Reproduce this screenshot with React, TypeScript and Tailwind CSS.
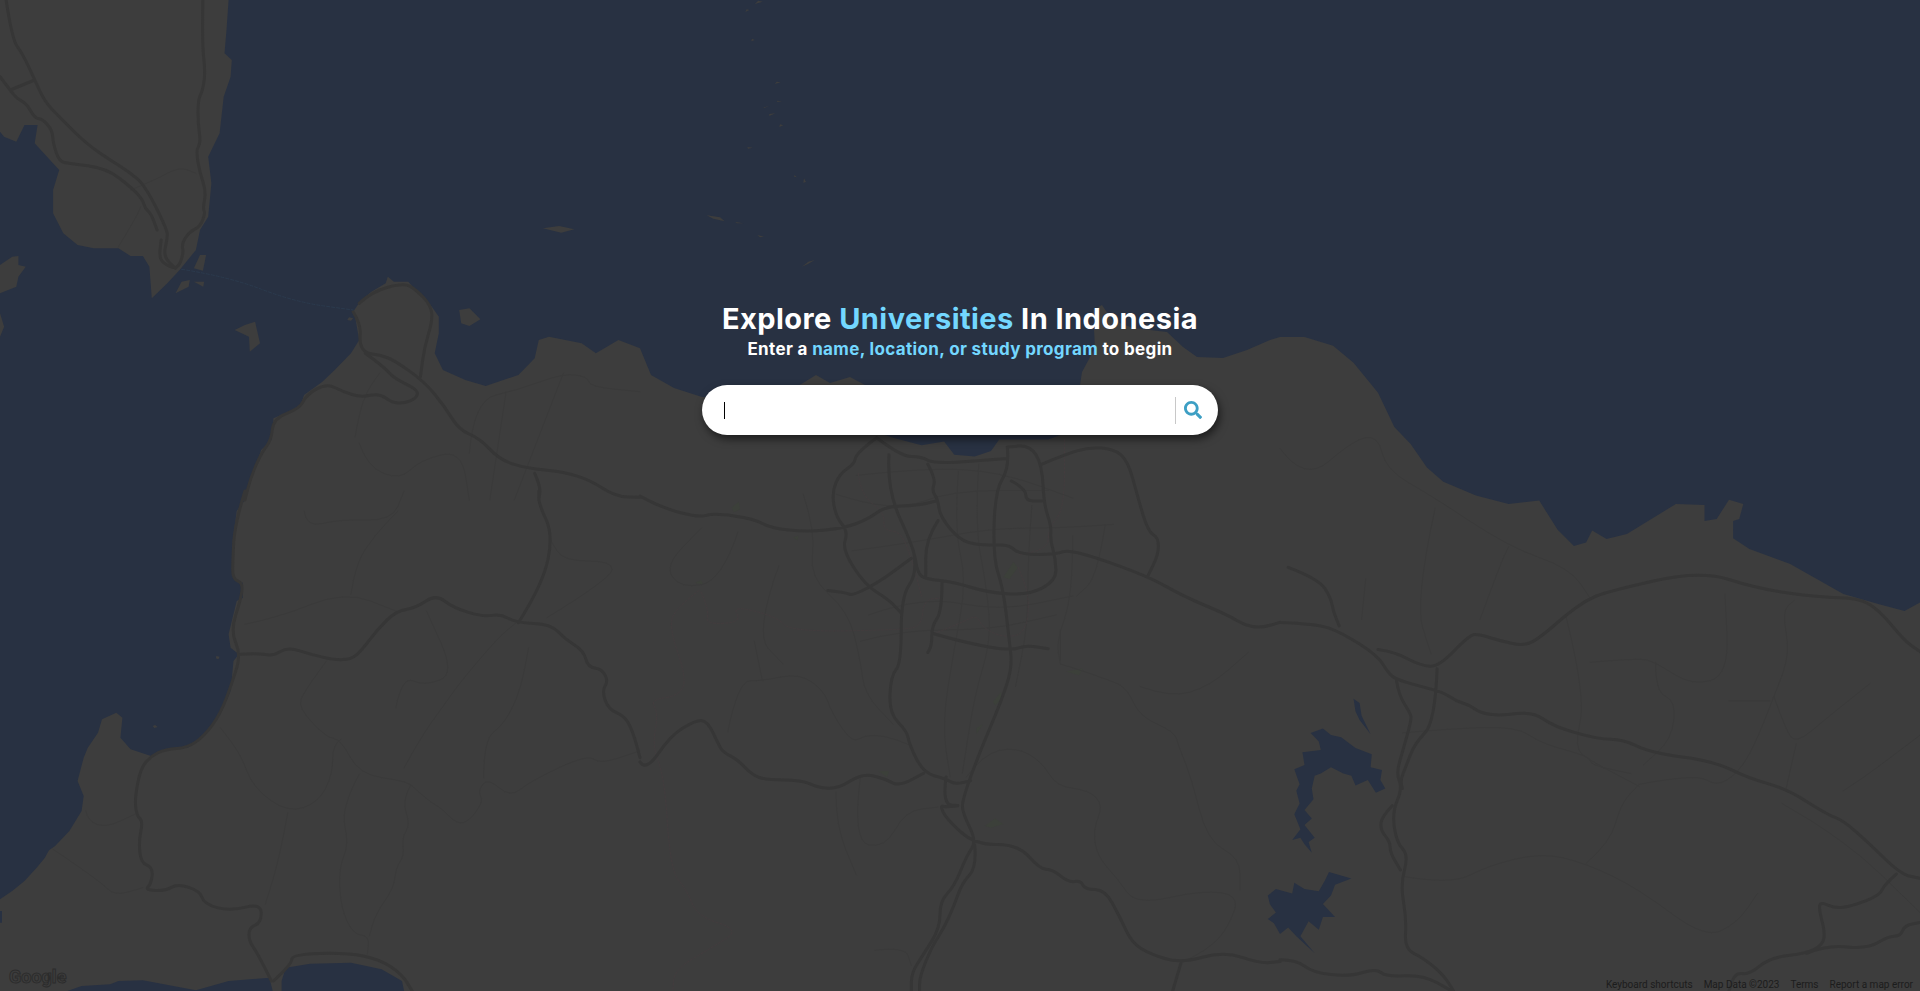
import { FaSearch } from "react-icons/fa";

// traced from crops of the map, each list in its own crop's coordinates
type Frame = [number, number, number, number];
const A: Frame = [0, 0, 2.45, 3];
const B: Frame = [0, 491, 2.45, 3];
const C: Frame = [640, 400, 2.45, 2.653];
const D: Frame = [1280, 320, 2.45, 2.337];
const R: Frame = [0, 0, 1, 1];

function pts([ox, oy, fx, fy]: Frame, s: string) {
  return s.split(" ").map((p) => {
    const [x, y] = p.split(",").map(Number);
    return `${(ox + x / fx).toFixed(1)} ${(oy + y / fy).toFixed(1)}`;
  });
}
const shape = (...parts: string[][]) => "M" + parts.flat().join("L") + "Z";

// rounds the corners of a traced road through the segment midpoints
function line(f: Frame, s: string) {
  const p = pts(f, s).map((v) => v.split(" ").map(Number));
  let d = `M${p[0][0]} ${p[0][1]}`;
  for (let i = 1; i < p.length - 1; i++) {
    const mx = (p[i][0] + p[i + 1][0]) / 2;
    const my = (p[i][1] + p[i + 1][1]) / 2;
    d += `Q${p[i][0]} ${p[i][1]} ${mx.toFixed(1)} ${my.toFixed(1)}`;
  }
  const last = p[p.length - 1];
  return d + `L${last[0]} ${last[1]}`;
}

const land = [
  shape(pts(A, "560,0 555,90 550,160 568,180 565,230 548,290 538,400 510,470 518,550 510,650 490,690 480,750 440,810 410,850 372,895 366,800 350,768 320,768 290,745 230,745 190,735 155,700 130,640 130,570 145,510 85,430 92,375 60,375 40,425 10,410 0,395 0,0")),
  shape(pts(A, "0,795 30,770 45,768 45,795 63,800 45,830 40,860 0,880")),
  shape(pts(A, "0,940 10,980 0,1010")),
  shape(pts(A, "490,765 505,765 497,812 475,805")),
  shape(pts(A, "430,880 445,845 465,840 462,860")),
  shape(pts(A, "475,845 500,845 498,860")),
  shape(pts(A, "575,990 600,975 625,965 637,1030 612,1055 610,1010")),
  shape(pts(A, "1330,685 1370,678 1407,688 1375,698")),
  shape(pts(A, "1125,930 1150,925 1177,958 1150,978 1130,970")),
  shape(pts(A, "855,952 865,955 860,962 851,960")),
  shape(pts(B, "380,702 386,708 378,711 374,705")),
  shape(pts(B, "530,495 538,497 535,505 529,502")),
  // Java
  shape(
    pts(B, "0,1225 30,1200 60,1170 90,1130 110,1100 120,1078 135,1065 170,1020 200,960 205,915 190,870 205,800 215,770 240,725 250,685 285,665 300,680 295,740 320,775 370,795 405,775 460,770 500,735 540,670 565,600 572,510 585,490 565,470 560,430 580,330 595,320 595,275 572,265 570,150 580,60"),
    pts(A, "600,1500 620,1420 640,1350 665,1320 670,1255 735,1220 745,1185 790,1145 820,1110 860,1060 880,1020 870,950 865,935 885,900 910,875 945,850 950,830 965,845 1000,845 1055,915 1075,950 1075,1000 1065,1060 1085,1110 1140,1140 1190,1158 1270,1125 1310,1075 1320,1020 1345,1010 1425,1030 1460,1060 1515,1020 1568,1045"),
    pts(R, "651,375 674,388 702,397 760,400 790,390 803,383 816,375 830,383 850,377 865,385 880,395 1060,395 1080,385 1082,372 1095,348 1093,310 1102,305 1112,320 1133,328 1167,332 1183,347 1197,357 1223,358 1247,350 1270,340"),
    pts(D, "0,40 60,40 130,60 180,100 240,170 280,250 320,290 360,345 400,378 480,410 560,430 635,422 680,490 720,528 750,520 765,492 800,512 850,500 970,430 1040,432 1040,470 1070,465 1100,420 1135,430 1125,465 1110,470 1110,510 1150,535 1250,570 1380,640 1470,665 1530,680 1568,660"),
    pts(R, "1920,991 0,991"),
  ),
];

const water = [
  shape(pts(C, "600,93 1030,93 1000,105 880,105 860,135 820,150 770,145 745,110 690,120 620,100")),
  shape(pts(B, "165,1500 200,1485 270,1480 290,1470 350,1468 480,1498 560,1470 660,1460 668,1500")),
  shape(pts(B, "690,1500 690,1470 700,1430 760,1418 860,1415 935,1435 985,1470 990,1500")),
  shape(pts(B, "0,1260 5,1260 5,1295 0,1295")),
  shape(pts(D, "75,965 105,955 125,970 150,975 185,1000 225,1015 222,1045 250,1052 246,1075 258,1095 235,1105 215,1075 185,1088 175,1065 155,1060 125,1045 100,1060 85,1065 78,1095 82,1120 60,1145 78,1165 60,1180 85,1210 70,1220 78,1245 60,1225 50,1210 30,1215 50,1190 35,1155 48,1130 40,1100 48,1085 35,1050 60,1040 55,1010 100,1005 95,985")),
  shape(pts(D, "-30,1345 -10,1330 30,1340 35,1315 60,1330 95,1335 110,1310 120,1290 175,1305 135,1320 125,1345 105,1365 135,1395 105,1395 95,1425 70,1405 50,1440 85,1480 40,1440 20,1420 0,1435 -15,1410 -30,1400 -10,1385 -25,1365")),
  shape(pts(D, "180,885 195,895 200,925 222,968 195,935 185,915")),
];

const islets = ["235,2 248,5 224,12", "200,28 208,30 196,36", "216,116 224,120 214,124", "290,245 302,247 284,252", "290,302 306,304 292,306", "252,322 268,318 250,325", "268,342 286,340 268,348", "300,373 310,376 298,381", "202,441 218,443 204,446", "372,535 378,546 370,548", "344,525 350,532 342,530", "80,646 120,652 134,664 100,656", "166,666 190,670 170,670", "232,705 252,710 240,712", "366,800 385,785 404,780 384,792"];

const highways = [
  line(A, "15,0 30,120 55,160 85,240 110,305 145,350 210,430 270,480 315,515 355,555 410,690 410,715 400,770 430,805"),
  line(A, "0,230 25,270 40,295 65,310 85,355 105,358 128,390 130,430 145,485 170,490 260,505 320,560 350,600 355,625 370,640 385,690"),
  line(A, "25,270 85,240"),
  line(A, "497,0 495,130 503,215 497,270 485,300 485,370 492,430 480,450 490,520 505,575 497,625 503,640 490,680 465,695 445,730 450,760 435,810 400,790 390,770 395,720"),
  line(A, "865,935 885,975 880,1030 895,1060 930,1065 965,1080 1040,1145 1090,1220 1125,1290 1175,1315 1225,1380 1290,1405 1380,1415 1445,1440 1510,1490 1568,1492"),
  line(A, "895,1060 940,1100 965,1135 1025,1170 1020,1195 990,1210 960,1208 930,1180 885,1192 840,1175 800,1150 750,1185 735,1225 670,1255 665,1320 640,1360 615,1430 600,1500"),
  line(A, "880,910 910,875 990,848 1020,870 1055,915 1060,960 1040,1040 1030,1130"),
  line(A, "1310,1420 1325,1460 1320,1500"),
  line(B, "600,0 575,100 570,210 570,265 595,275 590,325 565,420 590,490 570,570 540,670 500,735 460,770 405,775 370,795 345,830 330,920 335,975 350,990 340,1050 345,1115 375,1130 370,1180 355,1197 405,1200 435,1178 490,1200 500,1240 565,1260 640,1237 640,1295 610,1310 610,1350 630,1385 665,1470"),
  line(B, "590,490 630,487 670,495 705,468 760,490 820,507 860,505 885,480 925,415 970,360 1020,350 1068,310 1110,350 1185,378 1225,368 1265,395 1350,400 1385,445 1430,480 1440,528 1475,535 1490,570 1475,600 1490,655 1530,675 1550,720 1568,800"),
  line(B, "1270,395 1330,280 1355,130 1320,40 1320,0"),
  line(B, "670,1470 715,1420 715,1390 850,1385 930,1405 985,1450 1010,1500"),
  line(C, "0,255 50,285 145,312 180,300 280,315 320,340 410,350 500,340 560,315 600,283 680,280 725,268"),
  line(C, "580,100 530,140 525,170 490,195 470,245 480,310 510,350 495,395 550,490 610,530 640,565"),
  line(C, "610,145 605,240 670,390 680,460 700,475 770,483 850,510 950,518 1020,480 1018,420 1005,370 1008,335 990,280 985,170 955,120 900,125"),
  line(C, "580,100 640,150 690,150 720,170 900,155"),
  line(C, "705,170 725,210 715,240 730,265 735,310 790,380 860,385 905,385 930,410 1020,410 1055,395 1240,465 1330,520 1440,570 1480,597 1520,605 1568,590"),
  line(C, "900,125 905,180 870,240 865,420 890,500 905,640 912,710 885,800 830,940 790,1060 790,1095 825,1170 800,1210 770,1290 735,1330 735,1400 695,1470 665,1520 665,1568"),
  line(C, "910,215 945,235 945,268 985,268"),
  line(C, "985,170 1040,145 1100,125 1160,130 1195,160 1220,260 1245,350 1270,365 1270,410 1245,465"),
  line(C, "460,505 505,510 520,520 590,480 640,440 665,420"),
  line(C, "670,400 680,460 640,520 640,700 615,730 610,830 655,880 660,915 695,990 750,1005 770,1020 810,1010"),
  line(C, "740,485 740,560 715,600 715,650 705,670"),
  line(C, "720,620 800,645 910,665 945,650 1000,660"),
  line(C, "730,320 700,370 700,470"),
  line(C, "0,960 15,985 75,890 135,850 165,850 195,920 205,935 240,955 275,995 310,1008 395,1008 435,1028 485,1032 545,990 600,1005 635,1025 695,990"),
  line(C, "750,1000 740,1075 790,1075 750,1080 735,1075 750,1110 820,1180 925,1178 980,1245 1010,1245 1050,1280 1080,1275 1090,1298 1140,1300 1175,1370 1205,1440 1250,1470 1325,1495 1430,1462 1520,1495 1568,1490"),
  line(C, "820,1180 825,1240 790,1280 770,1340 745,1400 715,1450 685,1530 685,1568"),
  line(C, "1325,1495 1305,1568"),
  line(D, "0,707 90,710 150,730 240,785 265,825 285,840 340,855 400,870 430,890 465,900 490,918 540,925 620,915 670,950 780,980 840,980 910,1012 1060,1030 1150,1072 1240,1095 1340,1155 1380,1170 1440,1220 1520,1295 1568,1305"),
  line(D, "20,578 95,605 125,650 130,680 145,715"),
  line(D, "240,770 280,775 345,808 390,810 465,735 490,735 540,750 600,762 640,740 700,690 750,655 800,635 1030,585 1170,628 1320,648 1420,650 1470,680 1530,750 1568,775"),
  line(D, "385,815 380,940 330,990 310,1040 295,1075 300,1095"),
  line(D, "285,840 290,875 320,920 322,935 300,1010 285,1060 300,1095 275,1150 285,1220 315,1250 295,1320 310,1400 305,1470 350,1490 400,1530 425,1568"),
  line(D, "275,1135 250,1160 245,1190 270,1220 270,1245 295,1285"),
  line(D, "0,1495 40,1495 80,1525 170,1535 235,1515 260,1535 350,1530 420,1568"),
  line(D, "1510,1295 1480,1320 1470,1345 1400,1370 1360,1375 1325,1360 1320,1375 1335,1430 1330,1460 1290,1480 1200,1490 1150,1530 1115,1525 1100,1568"),
  line(D, "1290,1480 1340,1460 1440,1470 1490,1440 1520,1440 1530,1415 1568,1408"),
];

const minorRoads = [
  line(A, "870,1310 880,1240 900,1170 930,1120"),
  line(A, "320,570 380,540 440,500 480,520"),
  line(A, "290,740 330,660 345,620"),
  line(A, "1150,1360 1160,1200 1270,1170 1380,1120 1440,1130 1445,1160 1568,1175"),
  line(A, "880,1330 900,1400 980,1440 1030,1380 1130,1350 1150,1500"),
  line(A, "1200,1500 1240,1175"),
  line(A, "1260,1500 1380,1120"),
  line(B, "600,400 680,380 845,300 970,360"),
  line(B, "860,310 870,220 920,130 975,60"),
  line(B, "745,60 750,110 830,85 960,90 990,0"),
  line(B, "800,510 745,600 730,650 800,740 835,745 880,850 990,870 1010,885"),
  line(B, "835,745 815,760 815,850 780,935 705,965 620,890 590,790 540,710"),
  line(B, "705,965 685,1100 650,1240"),
  line(B, "880,850 835,950 855,1060 830,1130 835,1250 865,1330 905,1335 900,1390"),
  line(B, "1005,885 985,930 1005,1000 985,1040 990,1095 970,1130 965,1190 920,1270 905,1335"),
  line(B, "1005,880 1050,930 1080,950 1120,1000 1150,990 1185,930 1170,900 1195,860 1250,920 1300,870 1440,790 1470,820 1568,780"),
  line(B, "990,830 1030,740 1095,630 1130,570 1220,440 1265,395"),
  line(B, "970,650 985,555 1040,585 1115,550 1045,360"),
  line(B, "1185,860 1185,745 1235,700 1275,600 1295,470"),
  line(B, "1340,380 1500,260 1500,210 1380,210 1350,150"),
  line(B, "210,960 215,990 260,1010 330,970"),
  line(B, "130,1075 245,1170 280,1215 350,1190"),
  line(C, "215,880 240,745 300,745 390,725 450,770 470,830 520,910 550,890 600,890 660,915"),
  line(C, "800,1000 840,940 920,920 985,960 1020,1025 1100,1035 1135,1075 1110,1140 1120,1210 1170,1270 1215,1340 1380,1300 1470,1315 1440,1400 1400,1450 1325,1495"),
  line(C, "1030,700 1160,745 1195,770 1225,840 1310,880 1320,920 1350,1000 1390,1170 1470,1215 1470,1300"),
  line(C, "1030,690 1030,610"),
  line(C, "1225,760 1300,790 1395,760 1490,670"),
  line(C, "240,350 200,480 100,500 60,440 150,340"),
  line(C, "480,1040 480,1130 530,1260"),
  line(C, "540,1000 520,1170 600,1190 650,1090 730,1080"),
  line(C, "575,1460 650,1450 665,1500"),
  // Jakarta street grid
  line(C, "530,200 700,180 880,190 1060,260"),
  line(C, "480,250 620,300 760,240 1000,240"),
  line(C, "520,400 660,380 860,340 1020,340 1160,330"),
  line(C, "560,570 690,520 880,560 1060,520"),
  line(C, "540,640 640,610 860,610 1020,570"),
  line(C, "780,190 770,340 800,480 770,660 740,860 760,1000"),
  line(C, "830,170 820,330 850,500 860,640 820,780 790,990"),
  line(C, "960,280 950,420 950,600 920,760"),
  line(C, "1060,360 1060,520 1020,640 1030,700"),
  line(C, "1140,330 1120,470 1070,520"),
  line(C, "400,250 430,350 415,470 510,560 540,690 550,780 620,860"),
  line(C, "280,640 300,745"),
  line(C, "340,440 280,620 350,700"),
  line(D, "0,300 60,380 180,280 240,270 260,350 370,410 560,530 710,580 760,650"),
  line(D, "490,700 540,570 560,530"),
  line(D, "210,605 200,700"),
  line(D, "380,440 330,660 370,780"),
  line(D, "700,690 750,880 720,1000 760,1030 880,1090"),
  line(D, "880,1085 1020,1060 1070,1090 1120,1060 1160,1000 1210,880 1250,780 1230,680 1260,655"),
  line(D, "1210,880 1240,960 1265,990 1340,930 1445,850"),
  line(D, "1265,990 1240,1095"),
  line(D, "760,800 880,790 920,800 1010,855 1100,830 1090,640"),
  line(D, "920,800 920,870 970,890 960,980 890,1040"),
  line(D, "300,1300 420,1320 510,1275 640,1245 750,1270 880,1330 1040,1445 1120,1410 1170,1340"),
  line(D, "750,1270 810,1220 835,1130 880,1085"),
  line(D, "300,965 420,955 580,950 640,990 760,1020 760,1040 860,1060"),
  line(D, "1380,1100 1430,1070 1568,970"),
  line(D, "1100,890 1200,890"),
  line(D, "1230,1130 1380,1210 1568,1385"),
];

const trails = [
  line(C, "145,505 90,550 70,600 115,740 95,785 25,795 45,830 30,920 60,1000 75,1250 115,1300 140,1370 245,1405 180,1450 85,1510 80,1568"),
  line(C, "150,510 170,560 160,595 250,590 225,545 335,575 370,615 640,610 690,600 695,530 740,525"),
  line(C, "535,195 540,250 600,300 595,345 640,350 665,420 690,520"),
  line(C, "720,620 790,590 825,570 840,605 890,630 945,620 955,520 925,440"),
  line(C, "930,410 1000,400 1000,340 1040,290 1040,100"),
];

const parks = ["225,285 242,270 245,290 230,298", "375,365 388,360 386,372", "135,485 150,478 155,490", "890,470 915,430 925,445 905,475", "1045,720 1085,712 1075,730", "825,870 840,860 825,885", "865,800 885,775 885,795 870,810", "585,985 610,985 605,1000", "845,1130 870,1110 890,1125 860,1135"];

export default function App() {
  return (
    <div className="relative h-screen w-full overflow-hidden bg-[#283142] font-['Inter',sans-serif]">
      <svg className="absolute inset-0" width="1920" height="991" viewBox="0 0 1920 991">
        <path d={land.join("")} fill="#3d3d3d" />
        <path d={water.join("")} fill="#283142" />
        {islets.map((s) => (
          <path key={s} d={shape(pts([680, 0, 3, 3], s))} fill="#3d3d3d" />
        ))}
        {parks.map((s) => (
          <path key={s} d={shape(pts(C, s))} fill="#3c403a" />
        ))}
        <g fill="none" strokeLinejoin="round" strokeLinecap="round">
          <path d={minorRoads.join("")} stroke="#3a3a3a" strokeWidth="1" />
          <path d={trails.join("")} stroke="#433c3e" strokeWidth="1" strokeDasharray="2 2" />
          <path d={highways.join("")} stroke="#363636" strokeWidth="3" />
          <path d={line(A, "445,808 560,830 720,905 865,930")} stroke="#2b3a4d" strokeWidth="1" strokeDasharray="3 2" />
        </g>
      </svg>

      <div className="relative flex flex-col items-center pt-[301px]">
        <h1 className="text-[29px] leading-[36px] font-bold tracking-[0.45px] text-white">
          Explore <span className="text-[#73d7ff]">Universities</span> In Indonesia
        </h1>
        <p className="text-[17px] leading-[24px] font-bold tracking-[0.35px] text-white">
          Enter a <span className="text-[#73d7ff]">name, location, or study program</span> to begin
        </p>
        <div className="mt-[24px] flex h-[50px] w-[516px] items-center rounded-[25px] bg-white pl-[22px] pr-[16px] shadow-[2px_4px_8px_rgba(0,0,0,0.55)]">
          <span className="h-[17px] w-px shrink-0 bg-black" />
          <input className="min-w-0 flex-1 caret-transparent outline-none" aria-label="Search" />
          <div className="h-[27px] w-px shrink-0 bg-[#c8c8c8]" />
          <button className="ml-[8px] text-[#3d9fc4]" aria-label="Search">
            <FaSearch size={18} />
          </button>
        </div>
      </div>

      <span className="absolute bottom-[3px] left-[9px] text-[18px] leading-[22px] font-bold font-['Roboto',sans-serif] text-[#3d3d3d] [-webkit-text-stroke:1px_#2c2c2c]">
        Google
      </span>
      <div className="absolute bottom-0 right-[7px] flex h-[14px] items-center gap-[11px] font-['Roboto',sans-serif] text-[10px] text-[#1c1c1c]">
        <span>Keyboard shortcuts</span>
        <span>Map Data ©2023</span>
        <span>Terms</span>
        <span>Report a map error</span>
      </div>
    </div>
  );
}
